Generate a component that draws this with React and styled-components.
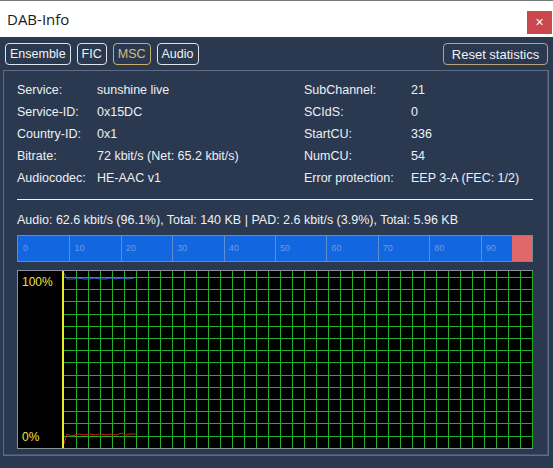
import styled, { createGlobalStyle } from 'styled-components';

const GlobalStyle = createGlobalStyle`
  html, body {
    margin: 0;
    padding: 0;
    background: #2a3950;
  }
  body {
    font-family: 'Liberation Sans', Arial, sans-serif;
  }
`;

const Window = styled.div`
  width: 553px;
  height: 468px;
  display: flex;
  flex-direction: column;
  background: #2a3950;
  overflow: hidden;
`;

const TitleBar = styled.div`
  height: 37px;
  border-top: 1px solid #7a7a7a;
  box-sizing: border-box;
  background: #ffffff;
  display: flex;
  align-items: center;
  justify-content: space-between;
  padding-left: 7px;
`;

const Title = styled.span`
  font-family: 'Open Sans', 'Liberation Sans', sans-serif;
  font-size: 15px;
  color: #1a1a1a;
`;

const CloseButton = styled.div`
  width: 25px;
  height: 23px;
  margin-right: 1px;
  margin-top: 6px;
  background: #c8484c;
  color: #ffffff;
  display: flex;
  align-items: center;
  justify-content: center;
  font-size: 14px;
`;

const Toolbar = styled.div`
  display: flex;
  align-items: center;
  gap: 6px;
  padding: 6px 5px 0 5px;
  height: 22px;
`;

const Tab = styled.div`
  height: 22px;
  box-sizing: border-box;
  padding: 0 4px;
  border: 1px solid ${(p) => (p.$active ? '#c9ad6e' : '#dfe3ea')};
  border-radius: 4px;
  color: ${(p) => (p.$active ? '#d6bb7c' : '#f2f2f2')};
  font-size: 12.5px;
  display: flex;
  align-items: center;
  white-space: nowrap;
`;

const Spacer = styled.div`
  flex: 1;
`;

const ResetButton = styled(Tab)`
  border-color: #b9a57a;
  color: #f2f2f2;
  padding: 0;
  width: 105px;
  font-size: 13px;
  justify-content: center;
`;

const Panel = styled.div`
  margin: 5px 4px 0 3px;
  height: 386px;
  box-sizing: border-box;
  border: 1px solid #5d6b84;
  box-shadow: inset -1px -1px 0 #445470;
  padding: 8px 15px 0 12px;
  display: flex;
  flex-direction: column;
`;

const InfoGrid = styled.div`
  display: grid;
  grid-template-columns: 80px 207px 107px 1fr;
  grid-auto-rows: 22px;
  align-items: center;
  padding-left: 1px;
`;

const Cell = styled.div`
  font-size: 12.5px;
  color: #eef0f3;
  white-space: nowrap;
`;

const Separator = styled.div`
  height: 1px;
  background: #eef0f3;
  margin: 10px 0 0 1px;
`;

const Stats = styled.div`
  font-size: 12.5px;
  color: #eef0f3;
  margin: 12px 0 0 1px;
  height: 16px;
  line-height: 16px;
  white-space: nowrap;
`;

const Bar = styled.div`
  margin: 7px 0 0 1px;
  height: 27px;
  box-sizing: border-box;
  border: 1px solid #7d8594;
  background: #1266e0;
  display: flex;
  position: relative;
`;

const BarSegment = styled.div`
  flex: 1;
  border-left: 1px solid ${(p) => (p.$first ? 'transparent' : '#5e8fd4')};
  font-size: 9px;
  color: #6f9ad8;
  padding: 7px 0 0 4px;
  box-sizing: border-box;
`;

const PadFill = styled.div`
  position: absolute;
  top: 0;
  right: 0;
  bottom: 0;
  background: #e06868;
`;

const Chart = styled.div`
  margin: 8px 0 0 1px;
  height: 179px;
  box-sizing: border-box;
  border: 1px solid #8a909c;
  background: #000000;
  display: flex;
`;

const Axis = styled.div`
  width: 46px;
  flex: none;
  border-right: 2px solid #e6ef20;
  display: flex;
  flex-direction: column;
  justify-content: space-between;
  padding: 4px 0 4px 4px;
  box-sizing: border-box;
`;

const AxisLabel = styled.span`
  font-size: 12px;
  color: #f0e040;
`;

const Plot = styled.svg`
  display: block;
  flex: none;
`;

const leftRows = [
  ['Service:', 'sunshine live', 'SubChannel:', '21'],
  ['Service-ID:', '0x15DC', 'SCIdS:', '0'],
  ['Country-ID:', '0x1', 'StartCU:', '336'],
  ['Bitrate:', '72 kbit/s (Net: 65.2 kbit/s)', 'NumCU:', '54'],
  ['Audiocodec:', 'HE-AAC v1', 'Error protection:', 'EEP 3-A (FEC: 1/2)'],
];

const ticks = [0, 10, 20, 30, 40, 50, 60, 70, 80, 90];

const PLOT_W = 469;
const PLOT_H = 177;

const vLines = [];
for (let x = 12; x < PLOT_W; x += 12) vLines.push(x);
const hLines = [];
for (let y = 6; y < PLOT_H; y += 12.2) hLines.push(Math.round(y));

const audioPts = '0,2 3,8 10,8 14,7 20,8 26,8 30,7 36,8 42,8 46,7 52,8 58,7 64,8 70,7';
const padPts = '0,173 3,163 8,165 14,163 20,164 26,163 32,164 36,163 42,164 48,163 52,164 58,162 62,164 66,163 72,163';

const App = () => {
  return (
    <>
      <GlobalStyle />
      <Window>
        <TitleBar>
          <Title>DAB-Info</Title>
          <CloseButton>×</CloseButton>
        </TitleBar>
        <Toolbar>
          <Tab>Ensemble</Tab>
          <Tab>FIC</Tab>
          <Tab $active>MSC</Tab>
          <Tab>Audio</Tab>
          <Spacer />
          <ResetButton>Reset statistics</ResetButton>
        </Toolbar>
        <Panel>
          <InfoGrid>
            {leftRows.map((r) => r.map((c, i) => <Cell key={r[0] + i}>{c}</Cell>))}
          </InfoGrid>
          <Separator />
          <Stats>
            Audio: 62.6 kbit/s (96.1%), Total: 140 KB | PAD: 2.6 kbit/s (3.9%), Total: 5.96 KB
          </Stats>
          <Bar>
            {ticks.map((t) => (
              <BarSegment key={t} $first={t === 0}>
                {t}
              </BarSegment>
            ))}
            <PadFill style={{ width: '3.9%' }} />
          </Bar>
          <Chart>
            <Axis>
              <AxisLabel>100%</AxisLabel>
              <AxisLabel>0%</AxisLabel>
            </Axis>
            <Plot width={PLOT_W} height={PLOT_H} viewBox={`0 0 ${PLOT_W} ${PLOT_H}`} shapeRendering="crispEdges">
              {vLines.map((x) => (
                <line key={'v' + x} x1={x + 0.5} y1="0" x2={x + 0.5} y2={PLOT_H} stroke="#22b02a" strokeWidth="1" />
              ))}
              {hLines.map((y) => (
                <line key={'h' + y} x1="0" y1={y + 0.5} x2={PLOT_W} y2={y + 0.5} stroke="#22b02a" strokeWidth="1" />
              ))}
              <polyline points={audioPts} fill="none" stroke="#2f6fd0" strokeWidth="1" shapeRendering="auto" />
              <polyline points={padPts} fill="none" stroke="#d02020" strokeWidth="1" shapeRendering="auto" />
            </Plot>
          </Chart>
        </Panel>
      </Window>
    </>
  );
};

export default App;
